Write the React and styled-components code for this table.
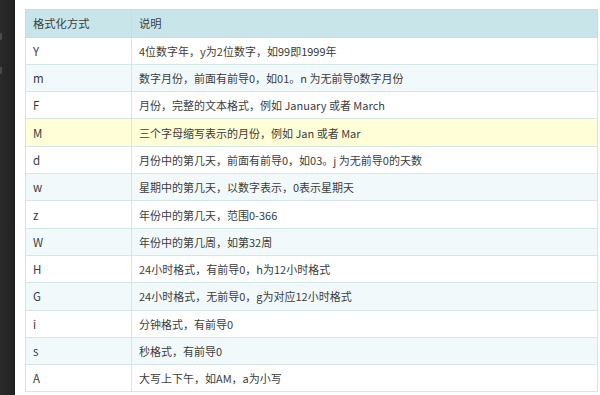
import React from "react";
import styled, { createGlobalStyle } from "styled-components";

const GlobalStyle = createGlobalStyle`
  html, body {
    margin: 0;
    padding: 0;
    background: #fff;
  }
  body {
    width: 600px;
    height: 395px;
    overflow: hidden;
    font-family: "Noto Sans CJK SC", "Noto Sans", sans-serif;
  }
`;

const Page = styled.div`
  display: flex;
  width: 600px;
  height: 395px;
`;

const Sidebar = styled.div`
  position: relative;
  width: 15px;
  flex: none;
  background: linear-gradient(to right, #2a2a2a, #222 80%, #1c1c1c);
`;

// little grey nubs of the cut-off toolbar icons
const Nub = styled.span`
  position: absolute;
  left: 0;
  top: ${(p) => p.top}px;
  width: 2px;
  height: 7px;
  background: #4a4a4a;
  border-radius: 0 1px 1px 0;
`;

const Main = styled.div`
  flex: 1;
  padding: 9px 0 0 10px;
`;

const Table = styled.table`
  width: 573px;
  border-collapse: collapse;
  table-layout: fixed;
  font-size: 11px;
  line-height: 16px;
  color: #3c3c3c;
`;

const HeadRow = styled.tr`
  height: 27.6px;
  background: #c8e6e9;
`;

const HeadCell = styled.th`
  padding: 0 7px;
  text-align: left;
  font-weight: normal;
  font-size: 11.3px;
  border: 1px solid #c2e0e2;
  color: #404040;
  white-space: nowrap;
`;

const Row = styled.tr`
  height: 27.3px;
  background: ${(p) => (p.hot ? "#fffed6" : p.odd ? "#f2f9fa" : "#fff")};
`;

const Cell = styled.td`
  padding: 0 7px;
  border: 1px solid #d3e7e7;
  white-space: nowrap;
`;

const KeyCell = styled(Cell)`
  font-size: 11.5px;
`;

const rows = [
  ["Y", "4位数字年，y为2位数字，如99即1999年"],
  ["m", "数字月份，前面有前导0，如01。n 为无前导0数字月份"],
  ["F", "月份，完整的文本格式，例如 January 或者 March"],
  ["M", "三个字母缩写表示的月份，例如 Jan 或者 Mar"],
  ["d", "月份中的第几天，前面有前导0，如03。j 为无前导0的天数"],
  ["w", "星期中的第几天，以数字表示，0表示星期天"],
  ["z", "年份中的第几天，范围0-366"],
  ["W", "年份中的第几周，如第32周"],
  ["H", "24小时格式，有前导0，h为12小时格式"],
  ["G", "24小时格式，无前导0，g为对应12小时格式"],
  ["i", "分钟格式，有前导0"],
  ["s", "秒格式，有前导0"],
  ["A", "大写上下午，如AM，a为小写"],
];

export default function App() {
  return (
    <Page>
      <GlobalStyle />
      <Sidebar>
        <Nub top={33} />
        <Nub top={67} />
      </Sidebar>
      <Main>
        <Table>
          <colgroup>
            <col style={{ width: 106 }} />
            <col />
          </colgroup>
          <thead>
            <HeadRow>
              <HeadCell>格式化方式</HeadCell>
              <HeadCell>说明</HeadCell>
            </HeadRow>
          </thead>
          <tbody>
            {rows.map(([k, v], i) => (
              <Row key={k} odd={i % 2 === 1} hot={k === "M"}>
                <KeyCell>{k}</KeyCell>
                <Cell>{v}</Cell>
              </Row>
            ))}
          </tbody>
        </Table>
      </Main>
    </Page>
  );
}
